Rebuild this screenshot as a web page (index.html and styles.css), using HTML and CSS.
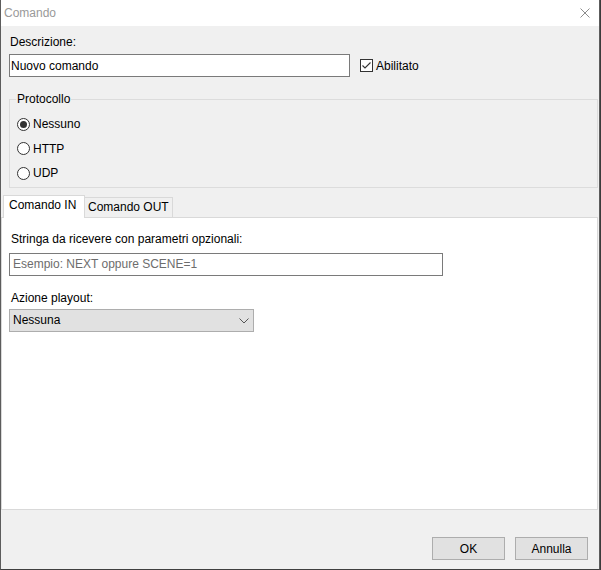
FILE: index.html
```html
<!DOCTYPE html>
<html>
<head>
    <meta charset="utf-8">
    <title>Comando</title>
    <link rel="stylesheet" href="styles.css">
</head>
<body>
<div class="window">
    <div class="titlebar">
        <span class="title">Comando</span>
        <svg class="close" width="10" height="10" viewBox="0 0 10 10">
            <path d="M0.5 0.5L9.5 9.5M9.5 0.5L0.5 9.5" stroke="#8c8c8c" stroke-width="1" fill="none"/>
        </svg>
    </div>
    <div class="content">
        <div class="label desc-label">Descrizione:</div>
        <div class="desc-row">
            <input class="textbox desc-input" type="text" value="Nuovo comando">
            <label class="check">
                <span class="checkbox">
                    <svg width="11" height="11" viewBox="0 0 11 11">
                        <path d="M1.5 5.5L4 8L9.5 2.5" stroke="#333" stroke-width="1.1" fill="none"/>
                    </svg>
                </span>
                Abilitato
            </label>
        </div>
        <fieldset class="group">
            <legend>Protocollo</legend>
            <label class="radio"><span class="circle on"></span>Nessuno</label>
            <label class="radio"><span class="circle"></span>HTTP</label>
            <label class="radio"><span class="circle"></span>UDP</label>
        </fieldset>
        <div class="tabs">
            <div class="tab active">Comando IN</div>
            <div class="tab">Comando OUT</div>
        </div>
        <div class="panel">
            <div class="label panel-label">Stringa da ricevere con parametri opzionali:</div>
            <input class="textbox str-input" type="text" placeholder="Esempio: NEXT oppure SCENE=1">
            <div class="label panel-label action-label">Azione playout:</div>
            <div class="select">
                <span>Nessuna</span>
                <svg width="10" height="6" viewBox="0 0 10 6">
                    <path d="M0.5 0.5L5 5L9.5 0.5" stroke="#555" stroke-width="1" fill="none"/>
                </svg>
            </div>
        </div>
    </div>
    <div class="buttons">
        <button class="btn">OK</button>
        <button class="btn">Annulla</button>
    </div>
</div>
</body>
</html>
```
FILE: styles.css
```css
html, body { margin: 0; padding: 0; }
body { background: #3b3b3b; font-family: "Liberation Sans", Arial, sans-serif; font-size: 12px; color: #000; }

.window { width: 600px; height: 570px; box-sizing: border-box; background: #f0f0f0; border-left: 1px solid #5c5c5c; border-right: 1px solid #5c5c5c; border-bottom: 1px solid #3f3f3f; display: flex; flex-direction: column; }

.titlebar { height: 26px; background: #fff; display: flex; align-items: center; justify-content: space-between; padding: 0 9px 0 3px; flex-shrink: 0; }
.title { font-size: 12px; color: #999; }
.close { display: block; }

.content { flex: 1; display: flex; flex-direction: column; }

.label { line-height: 13px; }
.desc-label { margin: 10px 0 0 9px; }

.desc-row { display: flex; align-items: center; margin: 5px 0 0 8px; }
.textbox { box-sizing: border-box; height: 23px; border: 1px solid #7a7a7a; background: #fff; font-family: inherit; font-size: 12px; padding: 0 3px; margin: 0; outline: none; }
.desc-input { width: 341px; color: #000; padding: 0 1px; }
.textbox::placeholder { color: #6d6d6d; }

.check { display: flex; align-items: center; margin-left: 10px; gap: 3px; }
.checkbox { width: 13px; height: 13px; box-sizing: border-box; border: 1px solid #333; background: #fff; display: flex; align-items: center; justify-content: center; }
.checkbox svg { display: block; }

.group { margin: 16px 1px 0 8px; padding: 0 0 1px 7px; border: 1px solid #dcdcdc; }
.group legend { margin-left: -1px; padding: 0 1px; line-height: 13px; }
.group legend + .radio { margin-top: 6px; }
.radio { display: flex; align-items: center; height: 24.5px; gap: 3px; }
.circle { width: 13px; height: 13px; box-sizing: border-box; border: 1px solid #333; border-radius: 50%; background: #fff; display: flex; align-items: center; justify-content: center; }
.circle.on::after { content: ""; width: 7px; height: 7px; border-radius: 50%; background: #333; }

.tabs { display: flex; align-items: flex-end; margin: 7px 0 0 2px; position: relative; z-index: 1; }
.tab { box-sizing: border-box; border: 1px solid #d9d9d9; border-bottom: none; background: #f0f0f0; line-height: 13px; white-space: nowrap; }
.tab.active { background: #fff; height: 23px; width: 82px; padding: 3px 0 0 5px; margin-bottom: -1px; }
.tab:not(.active) { height: 20px; width: 88px; padding: 3px 0 0 3px; border-left: none; }

.panel { flex: 1; background: #fff; border: 1px solid #d9d9d9; margin-right: 1px; display: flex; flex-direction: column; align-items: flex-start; padding: 15px 0 0 7px; }
.panel-label { margin-left: 2px; margin-bottom: 7px; }
.str-input { width: 434px; }
.action-label { margin-top: 16px; margin-bottom: 4px; }

.select { box-sizing: border-box; width: 245px; height: 23px; background: #e1e1e1; border: 1px solid #adadad; display: flex; align-items: center; justify-content: space-between; padding: 0 4px 0 3px; }
.select svg { display: block; margin-top: 1px; }

.buttons { display: flex; justify-content: flex-end; gap: 10px; padding: 27px 11px 9px 0; flex-shrink: 0; }
.btn { box-sizing: border-box; width: 73px; height: 23px; background: #e1e1e1; border: 1px solid #adadad; font-family: inherit; font-size: 12px; color: #000; padding: 0; margin: 0; }
```
